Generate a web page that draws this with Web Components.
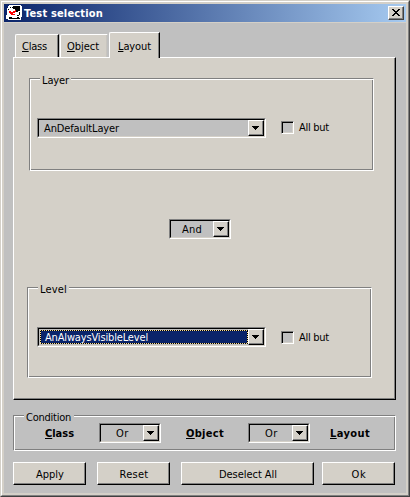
<!DOCTYPE html>
<html lang="en"><head><meta charset="utf-8"><title>Test selection</title>
<style>
html,body{margin:0;overflow:hidden}
body{width:410px;height:497px;font:11px/14px "DejaVu Sans Condensed","DejaVu Sans",sans-serif;font-stretch:condensed;color:#000;background:#d4d0c8}
.tabs{display:flex;align-items:flex-end;height:25px;padding-left:2px}
.group-row{display:flex;align-items:flex-start}
.group-row>fit-text{margin-top:4px}
.actions{display:flex;margin-top:11px}
</style></head><body>
<dialog-window>
  <fit-text slot="title" w="78" bold>Test selection</fit-text>
  <div class="tabs">
    <tab-item style="width:44px" pad="6"><fit-text w="24"><u>C</u>lass</fit-text></tab-item>
    <tab-item flat style="width:48px;margin-left:1px" pad="6"><fit-text w="31"><u>O</u>bject</fit-text></tab-item>
    <tab-item active style="width:51px;margin-left:1px" pad="8"><fit-text w="32"><u>L</u>ayout</fit-text></tab-item>
  </div>
  <tab-panel>
    <group-box style="width:345px;height:93px;margin:20px 0 0 15px;--cap-left:11px;--cap-width:31px">
      <fit-text slot="caption" w="26">Layer</fit-text>
      <div class="group-row" style="padding:39px 0 0 7px">
        <combo-box style="width:229px;--pad:5px"><fit-text w="74">AnDefaultLayer</fit-text></combo-box>
        <check-box style="margin:3px 0 0 15px"><fit-text w="29">All but</fit-text></check-box>
      </div>
    </group-box>
    <combo-box style="width:62px;margin:48px 0 0 155px;--pad:11px"><fit-text w="19">And</fit-text></combo-box>
    <group-box style="width:345px;height:91px;margin:48px 0 0 13px;--cap-left:11px;--cap-width:31px">
      <fit-text slot="caption" w="26">Level</fit-text>
      <div class="group-row" style="padding:39px 0 0 9px">
        <combo-box focused style="width:229px;--pad:5px"><fit-text w="102">AnAlwaysVisibleLevel</fit-text></combo-box>
        <check-box style="margin:4px 0 0 15px"><fit-text w="29">All but</fit-text></check-box>
      </div>
    </group-box>
  </tab-panel>
  <group-box style="width:383px;height:36px;margin-top:15px;--face:#c0c0c0;--cap-left:11px;--cap-width:50px">
    <fit-text slot="caption" w="44">Condition</fit-text>
    <div class="group-row" style="padding:7px 0 0 31px">
      <fit-text w="28" bold><u>C</u>lass</fit-text>
      <combo-box style="width:62px;margin-left:26px;--pad:15px"><fit-text w="12">Or</fit-text></combo-box>
      <fit-text w="37" bold style="margin-left:25px"><u>O</u>bject</fit-text>
      <combo-box style="width:62px;margin-left:25px;--pad:15px"><fit-text w="12">Or</fit-text></combo-box>
      <fit-text w="39" bold style="margin-left:20px"><u>L</u>ayout</fit-text>
    </div>
  </group-box>
  <div class="actions">
    <push-button style="width:73px"><fit-text w="27">Apply</fit-text></push-button>
    <push-button style="width:73px;margin-left:11px"><fit-text w="28">Reset</fit-text></push-button>
    <push-button style="width:133px;margin-left:11px"><fit-text w="57">Deselect All</fit-text></push-button>
    <push-button style="width:73px;margin-left:8px"><fit-text w="14">Ok</fit-text></push-button>
  </div>
</dialog-window>
<script>
const define = (name, html, init) => customElements.define(name, class extends HTMLElement {
  constructor() {
    super();
    this.attachShadow({ mode: "open" }).innerHTML = "<style>*{box-sizing:border-box}:host{box-sizing:border-box}</style>" + html;
  }
  connectedCallback() { if (init) init(this); }
});

define("dialog-window", `<style>
:host{display:block;width:410px;height:497px;border:1px solid;border-color:#d4d0c8 #404040 #404040 #d4d0c8}
.edge{height:100%;border:1px solid;border-color:#fff #808080 #808080 #fff;background:#d4d0c8;padding:2px}
.bar{height:18px;display:flex;align-items:center;padding:0 2px;background:linear-gradient(90deg,#0a246a,#a6caf0);color:#fff}
.name{padding-top:2px}
.icon{width:16px;height:16px;flex:none;margin-right:2px}
.close{width:16px;height:14px;margin-left:auto;background:#d4d0c8;border:1px solid;border-color:#fff #404040 #404040 #fff;box-shadow:inset -1px -1px #808080;display:block}
.client{margin-top:1px;height:470px;background:#c0c0c0;padding:9px 10px 0 9px}
svg{display:block}
</style><div class="edge"><div class="bar">
<svg class="icon" viewBox="0 0 16 16" shape-rendering="crispEdges">
<path fill="#fff" d="M3 0h12v1h1v11h-1v3h-13v-1h-2v-4h1v-7h1v-2h1z"/>
<path fill="#000" d="M7 1h7v5h-2v1h-2v-2h-1v-1h-2v-1h-1v-1h1zM4 2h1v1h-1zM2 4h1v1h-1zM13 7h1v3h-1zM3 12h3v1h5v-1h2v1h1v1h-11zM11 10h2v1h-2z"/>
<path fill="#f00" d="M3 6h2v1h2v-1h2v-1h1v2h-1v1h-2v1h2v1h-3v-1h-2v-1h-1zM5 9h1v1h-1z"/>
</svg><div class="name"><slot name="title"></slot></div>
<span class="close"><svg width="14" height="12" viewBox="0 0 14 12" shape-rendering="crispEdges"><path d="M3 2h2v1h1v1h2v-1h1v-1h2v1h-1v1h-1v1h-1v1h1v1h1v1h1v1h-2v-1h-1v-1h-2v1h-1v1h-2v-1h1v-1h1v-1h1v-1h-1v-1h-1v-1h-1z"/></svg></span>
</div><div class="client"><slot></slot></div></div>`);

define("tab-item", `<style>
:host{display:block;height:23px;background:#d4d0c8;border:1px solid;border-color:#fff #000 transparent #fff;border-bottom:0;border-top-left-radius:2px;box-shadow:inset -1px 0 #808080;padding-top:5px}
:host([flat]){border-right-color:#c0c0c0;box-shadow:inset -1px 0 #c8c5bf}
:host([active]){height:26px;margin-bottom:-1px;position:relative;z-index:1;padding-top:7px}
</style><slot></slot>`, e => e.style.paddingLeft = e.getAttribute("pad") + "px");

define("tab-panel", `<style>
:host{display:flow-root;width:383px;height:343px;background:#d4d0c8;border:1px solid;border-color:#fff #000 #000 #fff;box-shadow:inset -1px -1px #808080}
</style><slot></slot>`);

define("group-box", `<style>
:host{display:block;border:1px solid;border-color:#808080 #fff #fff #808080;box-shadow:inset 1px 1px #fff,inset -1px -1px #808080}
.wrap{position:relative}
.cap{position:absolute;left:calc(var(--cap-left) - 1px);top:-5px;width:var(--cap-width);height:14px;padding-left:2px;background:var(--face,#d4d0c8)}
</style><div class="wrap"><div class="cap"><slot name="caption"></slot></div></div><slot></slot>`);

define("combo-box", `<style>
:host{display:block;height:20px;flex:none;border:1px solid;border-color:#808080 #fff #fff #808080}
.in{display:flex;height:18px;border:1px solid;border-color:#000 #d4d0c8 #d4d0c8 #000;background:#c0c0c0}
.field{flex:1;padding:2px 0 0 var(--pad);height:16px}
.drop{width:16px;height:16px;background:#d4d0c8;border:1px solid;border-color:#fff #000 #000 #fff;box-shadow:inset -1px -1px #808080}
:host([focused]) .field{margin:1px 0 1px 1px;height:14px;padding-top:1px;color:#fff;
background:repeating-linear-gradient(90deg,#f5db95 0 1px,#000 1px 2px) top/100% 1px no-repeat,repeating-linear-gradient(90deg,#f5db95 0 1px,#000 1px 2px) bottom/100% 1px no-repeat,repeating-linear-gradient(#f5db95 0 1px,#000 1px 2px) left/1px 100% no-repeat,repeating-linear-gradient(#f5db95 0 1px,#000 1px 2px) right/1px 100% no-repeat,#0a246a}
svg{display:block}
</style><div class="in"><div class="field"><slot></slot></div><div class="drop"><svg width="14" height="14" shape-rendering="crispEdges"><path d="M3 5h7v1h-1v1h-1v1h-1v1h-1v-1h-1v-1h-1v-1h-1z"/></svg></div></div>`);

define("check-box", `<style>
:host{display:flex;align-items:flex-start;height:13px}
i{width:13px;height:13px;flex:none;margin-right:5px;background:#c0c0c0;border:1px solid;border-color:#808080 #fff #fff #808080;box-shadow:inset 1px 1px #000,inset -1px -1px #d4d0c8}
</style><i></i><slot></slot>`);

define("push-button", `<style>
:host{display:flex;justify-content:center;height:23px;padding-top:5px;background:#d4d0c8;border:1px solid;border-color:#fff #000 #000 #fff;box-shadow:inset -1px -1px #808080}
</style><slot></slot>`);

// A single line whose tracking is adjusted to a fixed run width.
define("fit-text", `<style>
:host{display:block;flex:none;height:14px;white-space:pre}
:host([bold]){font-weight:bold}
::slotted(u){text-decoration:underline;text-decoration-thickness:1px;text-underline-offset:1px;text-decoration-skip-ink:none}
span{display:inline-block}
</style><span><slot></slot></span>`, e => {
  const w = +e.getAttribute("w"), n = e.textContent.length;
  const run = e.shadowRoot.querySelector("span");
  e.style.width = w + "px";
  run.style.letterSpacing = (w + 1 - run.getBoundingClientRect().width) / n + "px";
});
</script></body></html>
